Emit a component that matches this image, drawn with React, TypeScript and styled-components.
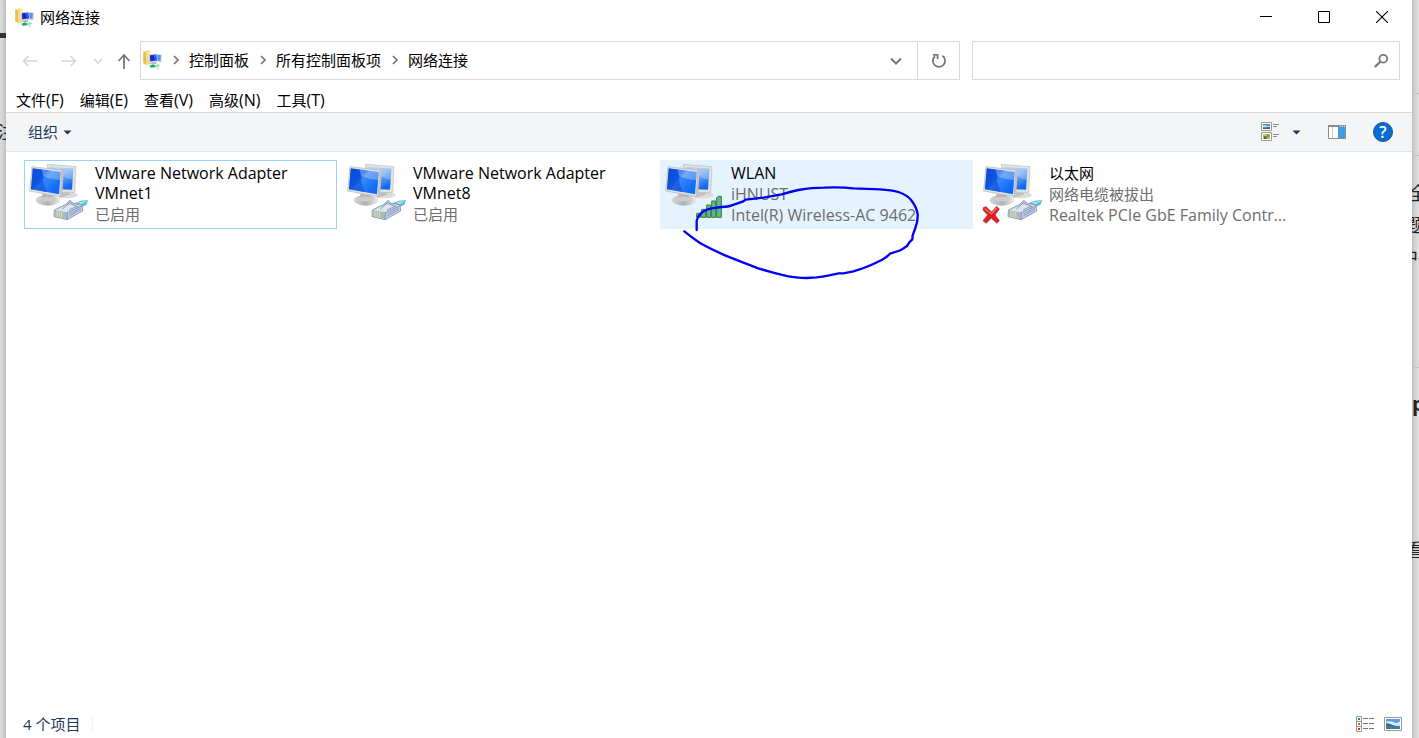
import React from "react";
import styled, { createGlobalStyle } from "styled-components";

const Global = createGlobalStyle`
  * { box-sizing: border-box; }
  body {
    margin: 0;
    background: #e3e3e3;
    font-family: "Open Sans", "Noto Sans CJK SC", sans-serif;
    font-size: 15px;
    line-height: 20px;
    color: #000;
  }
  button, input { font: inherit; color: inherit; }
`;

const Desktop = styled.div`
  display: grid;
  grid-template-columns: 6px minmax(0, 1fr) 7px;
  min-height: 100vh;
`;

const Strip = styled.div<{ $side: "left" | "right" }>`
  overflow: hidden;
  white-space: nowrap;
  color: #222;
  background: linear-gradient(
    to ${(p) => p.$side},
    #bdbdbd,
    #d2d2d2 3px,
    #e0e0e0 7px
  );
`;

const StripLine = styled.div<{ $before: number; $bold?: boolean; $shift?: number }>`
  margin-top: ${(p) => p.$before}px;
  margin-left: ${(p) => p.$shift ?? 0}px;
  height: 20px;
  font-size: ${(p) => (p.$bold ? 20 : 18)}px;
  font-weight: ${(p) => (p.$bold ? 700 : 400)};
`;

const StripRule = styled.div<{ $before: number; $thick?: boolean }>`
  margin-top: ${(p) => p.$before}px;
  height: ${(p) => (p.$thick ? 5 : 1)}px;
  background: ${(p) => (p.$thick ? "#333" : "#c4c4c4")};
`;

const Window = styled.main`
  display: flex;
  flex-direction: column;
  background: #fff;
  min-width: 0;
`;

const TitleBar = styled.header`
  display: flex;
  align-items: center;
  height: 34px;
  padding: 0 1px 0 9px;
`;

const Title = styled.h1`
  flex: 1;
  margin: 0 0 0 6px;
  font-size: 15px;
  font-weight: 400;
`;

const PlainButton = styled.button`
  display: flex;
  align-items: center;
  justify-content: center;
  padding: 0;
  border: 0;
  background: none;
`;

const CaptionButton = styled(PlainButton)`
  width: 58px;
  height: 34px;
`;

const AddressRow = styled.div`
  display: flex;
  align-items: center;
  height: 53px;
  padding: 0 12px 0 5px;
`;

const NavButton = styled(PlainButton)<{ $width: number }>`
  width: ${(p) => p.$width}px;
  height: 38px;
  flex: none;
`;

const AddressBox = styled.nav`
  display: flex;
  align-items: center;
  flex: 1;
  min-width: 0;
  height: 39px;
  padding-left: 2px;
  border: 1px solid #d9d9d9;
`;

const Crumbs = styled.div`
  display: flex;
  align-items: center;
  padding-bottom: 2px;
`;

const Crumb = styled.a`
  color: #000;
  text-decoration: none;
  white-space: nowrap;
`;

const CrumbArrow = styled.span`
  display: flex;
  justify-content: center;
  width: 27px;
`;

const AddressButton = styled(PlainButton)<{ $divided?: boolean }>`
  width: 42px;
  height: 37px;
  ${(p) => (p.$divided ? "border-left: 1px solid #d9d9d9;" : "margin-left: auto;")}
`;

const SearchBox = styled.label`
  display: flex;
  align-items: center;
  flex: 0 1 428px;
  min-width: 0;
  height: 39px;
  margin-left: 12px;
  padding: 0 10px;
  border: 1px solid #d9d9d9;
`;

const SearchInput = styled.input`
  flex: 1;
  min-width: 0;
  border: 0;
  outline: 0;
  background: none;
`;

const MenuBar = styled.div`
  display: flex;
  align-items: center;
  gap: 16px;
  height: 25px;
  padding: 0 10px;
`;

const MenuKey = styled.span`
  font-size: 16px;
`;

const Toolbar = styled.div`
  display: flex;
  align-items: center;
  height: 40px;
  padding: 0 19px 0 22px;
  border-top: 1px solid #d9d9d9;
  border-bottom: 1px solid #e4e5e7;
  background: #f4f5f7;
  color: #1e395b;
`;

const OrganizeButton = styled(PlainButton)`
  gap: 5px;
  margin-right: auto;
`;

const ToolGroup = styled.div`
  display: flex;
  align-items: center;
  gap: 27px;
`;

const ViewButton = styled(PlainButton)`
  gap: 13px;
`;

const HelpButton = styled(PlainButton)`
  width: 20px;
  height: 20px;
  border: 1px solid #17538f;
  border-radius: 50%;
  background: #0a6cce;
  color: #fff;
  font-size: 16px;
  font-weight: 600;
  line-height: 18px;
`;

const Files = styled.section`
  flex: 1;
  display: grid;
  grid-template-columns: repeat(auto-fill, 313px);
  gap: 5px;
  align-content: start;
  padding: 8px 18px;
`;

const Item = styled.button<{ $state?: "focused" | "hover" }>`
  position: relative;
  display: flex;
  gap: 6px;
  height: 69px;
  padding: 0;
  text-align: left;
  border: 1px solid
    ${(p) => (p.$state === "focused" ? "#99d1ff" : p.$state === "hover" ? "#e5f3ff" : "transparent")};
  background: ${(p) => (p.$state === "hover" ? "#e5f3ff" : "transparent")};
`;

const AdapterSvg = styled.svg`
  flex: none;
`;

const ItemText = styled.span`
  flex: 1;
  min-width: 0;
  padding: 2px 2px 0 0;
`;

const ItemName = styled.span<{ $latin: boolean }>`
  display: block;
  max-width: 210px;
  margin-bottom: 1px;
  font-size: ${(p) => (p.$latin ? 16 : 15)}px;
  line-height: 20px;
`;

const ItemDetail = styled.span<{ $latin: boolean }>`
  display: block;
  font-size: ${(p) => (p.$latin ? 16 : 15)}px;
  line-height: 21px;
  color: #6d6d6d;
  white-space: nowrap;
  overflow: hidden;
  text-overflow: ellipsis;
`;

const Scribble = styled.svg`
  position: absolute;
  left: -1px;
  top: -1px;
  pointer-events: none;
`;

const StatusBar = styled.footer`
  display: flex;
  align-items: center;
  height: 28px;
  padding: 0 10px 0 17px;
  color: #1e395b;
`;

const Count = styled.span`
  padding-right: 12px;
  margin-right: auto;
  line-height: 14px;
  border-right: 1px solid #f0f0f0;
`;

const StatusButtons = styled.div`
  display: flex;
  gap: 10px;
`;

const FolderIcon = () => (
  <svg width="19" height="19" viewBox="1 1 57 57" aria-hidden="true">
    <path d="M2 5 L17 2 L25 6 L25 43 L10 46 L2 40Z" fill="#f4dc85" />
    <path d="M2 5 L10 10 L10 46 L2 40Z" fill="#e4c05b" />
    <path d="M17 2 L25 6 V20 L17 22Z" fill="#fbefb6" />
    <path d="M36 12 L57 15 L56 37 L36 35Z" fill="#b7c6dc" />
    <path d="M39 15 L54 17 L53 33 L39 31Z" fill="#5b8ce8" />
    <path d="M19 14 L43 12 L46 35 L20 38Z" fill="#c3cde0" />
    <path d="M22 17 L40 15 L43 32 L23 35Z" fill="#1527c9" />
    <path d="M32 16 L40 15 L43 32 L37 33Z" fill="#2d5cee" />
    <path d="M26 38 L40 37 L42 43 L24 43Z" fill="#aeb8c8" />
    <path d="M20 49 L30 44 L40 47 L38 53 L25 54Z" fill="#1cb554" />
    <path d="M35 47 L48 44 L53 48 L42 53Z" fill="#9fdcb5" />
    <path d="M38 55 L51 53 L48 57Z" fill="#b9c0cb" />
  </svg>
);

const CrumbChevron = () => (
  <svg width="8" height="10" viewBox="0 0 8 10" fill="none" stroke="#777" strokeWidth="1.7" aria-hidden="true">
    <path d="M2 1 L6 5 L2 9" />
  </svg>
);

const Caret = () => (
  <svg width="9" height="5" viewBox="0 0 9 5" aria-hidden="true">
    <path d="M0.5 0.5 H8.5 L4.5 4.5Z" fill="#1e395b" />
  </svg>
);

type Badge = "cable" | "signal" | "unplugged";

const Plug = () => (
  <g>
    <path d="M224 159 Q242 150 264 150 L260 164 L238 174Z" fill="#5fc0dc" />
    <path d="M232 158 L262 152 L244 163Z" fill="#b5e8f2" />
    <path d="M196 164 L210 151 L220 160 L246 164 L248 183 L202 209 L162 200 L163 180Z" fill="#c2cee2" stroke="#8191b0" strokeWidth="2.5" />
    <path d="M165 181 L200 187 L201 207 L164 199Z" fill="#aab8c4" />
    <path d="M171 184 V200 M178 185 V202 M185 186 V203" stroke="#dde08a" strokeWidth="3.5" />
    <path d="M167 181 L203 164 L244 167 L203 187Z" fill="#dde5f2" />
    <path d="M187 177 L209 158 L219 164 L235 172 M202 188 L246 167 M207 180 L233 168 M202 187 V208" fill="none" stroke="#7888aa" strokeWidth="2.5" />
    <path d="M208 201 L243 181 V170 L208 190Z" fill="#a3b3d3" />
  </g>
);

const AdapterIcon = ({ badge, id }: { badge: Badge; id: string }) => (
  <AdapterSvg width="64" height="64" viewBox="75 33 192 192" aria-hidden="true">
    <defs>
      <linearGradient id={`${id}-screen`} x1="0" y1="0" x2="0.9" y2="0.7">
        <stop offset="0" stopColor="#1250d0" />
        <stop offset="0.42" stopColor="#0a5cf0" />
        <stop offset="0.55" stopColor="#3d88f8" />
        <stop offset="1" stopColor="#0f6afa" />
      </linearGradient>
      <linearGradient id={`${id}-back`} x1="0" y1="0" x2="0.6" y2="1">
        <stop offset="0" stopColor="#b9d9fb" />
        <stop offset="0.5" stopColor="#74aef6" />
        <stop offset="1" stopColor="#1468f0" />
      </linearGradient>
      <linearGradient id={`${id}-stand`} x1="0" y1="0" x2="1" y2="0">
        <stop offset="0" stopColor="#d8d8d8" />
        <stop offset="0.5" stopColor="#b0b0b0" />
        <stop offset="1" stopColor="#ececec" />
      </linearGradient>
    </defs>
    <ellipse cx="203" cy="135" rx="30" ry="10" fill="#dcdcdc" />
    <path d="M178 120 L207 122 L209 134 L178 144Z" fill="#c0c0c0" />
    <path d="M142 43 L228 50 L224 127 L186 128 L146 110Z" fill="#e2e2e0" stroke="#bdbdbc" strokeWidth="2" />
    <path d="M147 50 L220 56 L216 119 L184 118 L148 98Z" fill={`url(#${id}-back)`} />
    <path d="M163 52 L220 56 L218 88 Q193 90 181 64Z" fill="#ffffff" opacity="0.25" />
    <ellipse cx="144" cy="151" rx="37" ry="16" fill={`url(#${id}-stand)`} />
    <path d="M128 131 L158 136 L160 152 Q142 157 123 150Z" fill="#b5b5b5" />
    <ellipse cx="143" cy="147" rx="25" ry="7" fill="#cccccc" />
    <path d="M96 50 L190 61 L184 140 L89 123Z" fill="#e4e4e2" stroke="#b2b2b2" strokeWidth="2" />
    <path d="M184 61 L191 61 L186 140 L179 139Z" fill="#c2c2c2" />
    <path d="M98 55 L182 66 L177 133 L93 118Z" fill={`url(#${id}-screen)`} />
    <path d="M99 56 L125 59 Q127 91 140 126 L93 118Z" fill="#0b4cd6" opacity="0.6" />
    <path d="M125 59 L182 66 L180 90 Q151 88 130 79Z" fill="#fff" opacity="0.28" />
    {(badge === "cable" || badge === "unplugged") && <Plug />}
    {badge === "signal" && (
      <g fill="#67b784" stroke="#2d7d49" strokeWidth="3">
        <path d="M182 190 H194 V202 H182Z" />
        <path d="M197 178 H209 V202 H197Z" />
        <path d="M212 165 H224 V202 H212Z" />
        <path d="M227 153 H239 V202 H227Z" />
        <path d="M242 143 L248 139 H256 V202 H242Z" />
      </g>
    )}
    {badge === "unplugged" && (
      <>
        <path d="M88 173 L96 170 L113 186 L128 169 L136 177 L123 195 L136 212 L129 220 L112 205 L96 220 L87 212 L101 195 L87 180Z" fill="#dc2024" stroke="#b9262a" strokeWidth="2" strokeLinejoin="round" />
        <path d="M92 176 L112 192 L128 174" fill="none" stroke="#f07f7a" strokeWidth="3.5" />
      </>
    )}
  </AdapterSvg>
);

type Adapter = {
  id: string;
  name: string;
  details: string[];
  badge: Badge;
  state?: "focused" | "hover";
  marked?: boolean;
};

const adapters: Adapter[] = [
  { id: "vmnet1", name: "VMware Network Adapter VMnet1", details: ["已启用"], badge: "cable", state: "focused" },
  { id: "vmnet8", name: "VMware Network Adapter VMnet8", details: ["已启用"], badge: "cable" },
  { id: "wlan", name: "WLAN", details: ["iHNUST", "Intel(R) Wireless-AC 9462"], badge: "signal", state: "hover", marked: true },
  { id: "ethernet", name: "以太网", details: ["网络电缆被拔出", "Realtek PCIe GbE Family Controller"], badge: "unplugged" },
];

const crumbs = ["控制面板", "所有控制面板项", "网络连接"];
const menus = [
  ["文件", "F"],
  ["编辑", "E"],
  ["查看", "V"],
  ["高级", "N"],
  ["工具", "T"],
];

// Latin text is set one size up so that it sits level with the Chinese glyphs.
const isLatin = (text: string) => /^[\x00-\x7f]+$/.test(text);

export default function App() {
  return (
    <>
      <Global />
      <Desktop>
        <Strip $side="left" aria-hidden="true">
          <StripRule $before={33} $thick />
          <StripLine $before={84} $shift={-3}>注</StripLine>
        </Strip>

        <Window>
          <TitleBar>
            <FolderIcon />
            <Title>网络连接</Title>
            <CaptionButton aria-label="最小化">
              <svg width="12" height="12" viewBox="0 0 12 12"><path d="M0 5.5 H12" stroke="#000" /></svg>
            </CaptionButton>
            <CaptionButton aria-label="最大化">
              <svg width="12" height="12" viewBox="0 0 12 12"><path d="M0.5 0.5 H11.5 V11.5 H0.5Z" fill="none" stroke="#000" /></svg>
            </CaptionButton>
            <CaptionButton aria-label="关闭">
              <svg width="12" height="12" viewBox="0 0 12 12"><path d="M0 0 L12 12 M12 0 L0 12" stroke="#000" strokeWidth="1.1" /></svg>
            </CaptionButton>
          </TitleBar>

          <AddressRow>
            <NavButton $width={38} aria-label="后退">
              <svg width="16" height="12" viewBox="0 0 16 12" fill="none" stroke="#d6d6d6" strokeWidth="1.7"><path d="M15.5 6 H1.5 M6.5 1 L1.5 6 L6.5 11" /></svg>
            </NavButton>
            <NavButton $width={39} aria-label="前进">
              <svg width="16" height="12" viewBox="0 0 16 12" fill="none" stroke="#d6d6d6" strokeWidth="1.7"><path d="M0.5 6 H14.5 M9.5 1 L14.5 6 L9.5 11" /></svg>
            </NavButton>
            <NavButton $width={20} aria-label="最近浏览的位置">
              <svg width="10" height="6" viewBox="0 0 10 6" fill="none" stroke="#d6d6d6" strokeWidth="1.6"><path d="M1 1 L5 5 L9 1" /></svg>
            </NavButton>
            <NavButton $width={32} aria-label="上移">
              <svg width="14" height="16" viewBox="0 0 14 16" fill="none" stroke="#777" strokeWidth="1.8"><path d="M7 16 V2 M1.5 8 L7 2 L12.5 8" /></svg>
            </NavButton>
            <AddressBox aria-label="地址">
              <Crumbs>
                <FolderIcon />
                {crumbs.map((c) => (
                  <React.Fragment key={c}>
                    <CrumbArrow><CrumbChevron /></CrumbArrow>
                    <Crumb href="#">{c}</Crumb>
                  </React.Fragment>
                ))}
              </Crumbs>
              <AddressButton aria-label="以前的位置">
                <svg width="12" height="8" viewBox="0 0 12 8" fill="none" stroke="#777" strokeWidth="2"><path d="M1 1.5 L6 6.5 L11 1.5" /></svg>
              </AddressButton>
              <AddressButton $divided aria-label="刷新">
                <svg width="16" height="16" viewBox="0 0 16 16" fill="none" stroke="#777" strokeWidth="1.8">
                  <path d="M11.4 2.8 A6.1 6.1 0 1 1 4 3.2" />
                  <path d="M2 1.8 H6.6 V6" />
                </svg>
              </AddressButton>
            </AddressBox>
            <SearchBox>
              <SearchInput type="search" aria-label="搜索网络连接" />
              <svg width="16" height="16" viewBox="0 0 16 16" fill="none" stroke="#777" aria-hidden="true">
                <circle cx="10.3" cy="5.7" r="3.9" strokeWidth="1.8" />
                <path d="M7.5 8.5 L1.8 14" strokeWidth="2.2" />
              </svg>
            </SearchBox>
          </AddressRow>

          <MenuBar>
            {menus.map(([label, key]) => (
              <PlainButton key={key}>
                {label}
                <MenuKey>({key})</MenuKey>
              </PlainButton>
            ))}
          </MenuBar>

          <Toolbar>
            <OrganizeButton>组织<Caret /></OrganizeButton>
            <ToolGroup>
              <ViewButton aria-label="更改视图">
                <svg width="18" height="20" viewBox="0 0 54 60" aria-hidden="true">
                  <path d="M1.5 1.5 H31.5 V25.5 H1.5Z M1.5 31.5 H31.5 V55.5 H1.5Z" fill="#fff" stroke="#999" strokeWidth="3" />
                  <path d="M6 6 H27 V21 H6Z" fill="#4e8fdb" />
                  <path d="M6 12 Q12 7 18 13 L27 12 V16 H6Z" fill="#d5e9f4" />
                  <path d="M6 17 L27 15 V21 H6Z" fill="#356b58" />
                  <path d="M6 36 H27 V51 H6Z" fill="#9bc47a" />
                  <path d="M6 36 H15 V42 H6Z" fill="#e5bf4b" />
                  <path d="M18 39 H25 V45 H18Z" fill="#d9622a" />
                  <path d="M9 43 H17 V51 H9Z" fill="#337b3c" />
                  <path d="M36 7.5 H54 M36 13.5 H48 M36 37.5 H54 M36 43.5 H48" stroke="#8b8b8b" strokeWidth="3" />
                </svg>
                <Caret />
              </ViewButton>
              <PlainButton aria-label="显示预览窗格">
                <svg width="18" height="14" viewBox="0 0 54 42" aria-hidden="true">
                  <path d="M1.5 1.5 H52.5 V40.5 H1.5Z" fill="#fff" stroke="#8b8d90" strokeWidth="3" />
                  <path d="M0 0 H54 V6 H0Z" fill="#8b8d90" />
                  <path d="M13.5 6 V39" stroke="#c9c9c9" strokeWidth="3" />
                  <path d="M30 6 H51 V39 H30Z" fill="#3f9be4" />
                  <path d="M36 4 H39 M42 4 H45 M48 4 H51" stroke="#fff" strokeWidth="2.5" />
                </svg>
              </PlainButton>
              <HelpButton aria-label="获取帮助">?</HelpButton>
            </ToolGroup>
          </Toolbar>

          <Files aria-label="网络连接">
            {adapters.map((a) => (
              <Item key={a.id} $state={a.state}>
                <AdapterIcon badge={a.badge} id={a.id} />
                <ItemText>
                  <ItemName $latin={isLatin(a.name)}>{a.name}</ItemName>
                  {a.details.map((d) => <ItemDetail key={d} $latin={isLatin(d)}>{d}</ItemDetail>)}
                </ItemText>
                {a.marked && (
                  <Scribble width="313" height="130" viewBox="30 30 939 390" fill="none" stroke="#0000f8" strokeWidth="7" strokeLinecap="round" strokeLinejoin="round" aria-hidden="true">
                    <path d="M140 240 V212 Q143 200 152 191 Q165 178 185 175 L215 171 Q235 170 245 166 L280 154 L287 149 L340 143 L395 133 Q420 125 445 120 Q490 113 520 113 Q575 111 610 115 L690 118 Q725 120 745 126 Q772 135 785 152 Q800 172 803 192 Q804 215 796 234 L788 256 L787 268 L778 277 L771 288 Q755 300 745 303 L720 311 Q710 322 695 330 Q650 353 610 364 L580 370 L566 370 Q520 380 500 382 L470 384 Q435 383 415 379 Q370 369 325 355 Q270 334 225 316 Q180 296 150 279 Q125 262 103 244" />
                  </Scribble>
                )}
              </Item>
            ))}
          </Files>

          <StatusBar>
            <Count>4 个项目</Count>
            <StatusButtons>
              <PlainButton aria-label="详细信息">
                <svg width="18" height="16" viewBox="0 0 54 48" aria-hidden="true">
                  <path d="M1.5 1.5 H16.5 V46.5 H1.5Z M1.5 16.5 H16.5 M1.5 31.5 H16.5" fill="#fff" stroke="#999" strokeWidth="3" />
                  <path d="M6 6 H12 V12 H6Z" fill="#3d7aa8" />
                  <path d="M6 21 H12 V27 H6Z" fill="#a87432" />
                  <path d="M6 36 H12 V42 H6Z" fill="#d42c20" />
                  <path d="M21 7.5 H36 M39 7.5 H54 M21 22.5 H36 M39 22.5 H54 M21 37.5 H36 M39 37.5 H54" stroke="#777" strokeWidth="3" />
                </svg>
              </PlainButton>
              <PlainButton aria-label="大缩略图">
                <svg width="18" height="14" viewBox="0 0 54 42" aria-hidden="true">
                  <path d="M1.5 1.5 H52.5 V40.5 H1.5Z" fill="#fff" stroke="#999" strokeWidth="3" />
                  <path d="M6 6 H48 V36 H6Z" fill="#5b9bec" />
                  <path d="M6 14 Q20 10 30 16 T48 13 V26 H6Z" fill="#d8ebf6" />
                  <path d="M6 18 Q20 20 28 25 L44 29 H6Z" fill="#3b6e5c" />
                  <path d="M6 28 H48 V36 H6Z" fill="#3a7ba3" />
                </svg>
              </PlainButton>
            </StatusButtons>
          </StatusBar>
        </Window>

        <Strip $side="right" aria-hidden="true">
          <StripRule $before={93} />
          <StripRule $before={61} />
          <StripLine $before={27} $shift={-3}>全</StripLine>
          <StripLine $before={12} $shift={-6}>题</StripLine>
          <StripLine $before={12} $shift={-12}>中-</StripLine>
          <StripRule $before={100} />
          <StripLine $before={26} $bold>p</StripLine>
          <StripLine $before={126} $shift={-6}>看</StripLine>
        </Strip>
      </Desktop>
    </>
  );
}
